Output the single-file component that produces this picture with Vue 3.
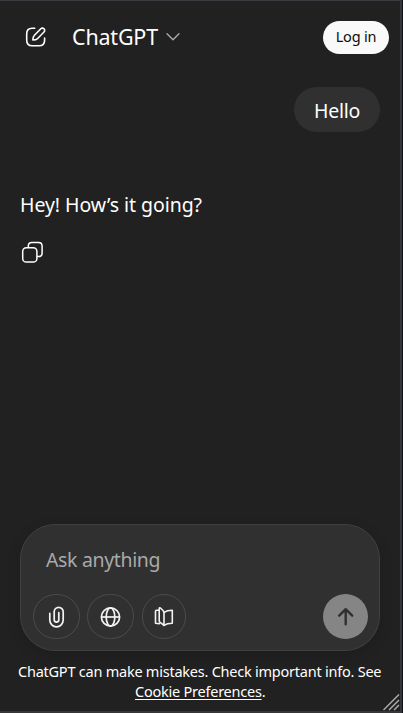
<script setup>
</script>

<template>
  <div class="window">
    <header class="topbar">
      <svg class="compose" viewBox="0 0 24 24" width="24" height="24" fill="none" stroke="currentColor" stroke-width="1.6" stroke-linecap="round" stroke-linejoin="round">
        <path d="M10.7 3.2H8.2C4.3 3.2 2.7 4.8 2.7 8.7v6.6c0 3.9 1.6 5.5 5.5 5.5h6.9c3.9 0 5.5-1.6 5.5-5.5V13" />
        <path d="M16.8 3.8a2.25 2.25 0 0 1 3.2 3.2l-6.6 6.7c-.8.8-2.4 1.3-4.5 1.3 0-2.1.4-3.7 1.3-4.5z" />
      </svg>
      <h1 class="title">ChatGPT</h1>
      <svg class="chevron" viewBox="0 0 16 10" width="16" height="10" fill="none" stroke="currentColor" stroke-width="1.4" stroke-linecap="round" stroke-linejoin="round">
        <path d="M2 1.8 8 7.8l6-6" />
      </svg>
      <button class="login"><span>Log in</span></button>
    </header>

    <main class="thread">
      <div class="bubble"><span>Hello</span></div>
      <p class="answer">Hey! How’s it going?</p>
      <svg class="copy" viewBox="0 0 24 24" width="24" height="24" fill="none" stroke="currentColor" stroke-width="1.5" stroke-linejoin="round">
        <rect x="2.7" y="7.8" width="14.2" height="14.2" rx="3.6" />
        <path d="M8.3 7.8V6.2c0-2.5 1.1-3.6 3.6-3.6h6.6c2.5 0 3.6 1.1 3.6 3.6V13c0 2.5-1.1 3.6-3.6 3.6h-1.6" />
      </svg>
    </main>

    <section class="composer">
      <div class="prompt">Ask anything</div>
      <div class="tools">
        <button class="tool">
          <svg viewBox="0 0 24 24" width="24" height="24" fill="none" stroke="currentColor" stroke-width="1.7" stroke-linecap="round">
            <path d="M4.8 8.3v6.8a6.7 6.7 0 0 0 13.4 0V6.8a4.5 4.5 0 0 0-9 0v8a2.3 2.3 0 0 0 4.6 0V7.7" />
          </svg>
        </button>
        <button class="tool">
          <svg viewBox="0 0 24 24" width="24" height="24" fill="none" stroke="currentColor" stroke-width="1.7">
            <circle cx="11.5" cy="12" r="9.1" />
            <ellipse cx="11.5" cy="12" rx="4.3" ry="9.1" />
            <path d="M2.4 12h18.2" />
          </svg>
        </button>
        <button class="tool study">
          <svg viewBox="0 0 24 24" width="24" height="24" fill="none" stroke="currentColor" stroke-width="1.6" stroke-linejoin="round" stroke-linecap="round">
            <path d="M12 7.4c2.3-1.7 5-2.2 8.3-2.2v13.1c-3.3 0-6 .4-8.3 2" />
            <path d="M7.2 5.2H4.5c-.7 0-1 .3-1 1v12.1c1.4 0 2.7.1 3.8.3" />
            <path d="M7.2 3.8v12c0 .7.3 1.2.9 1.6L12 20.3V7.5c0-.7-.2-1.2-.8-1.7L8.7 3.3C7.9 2.5 7.2 2.8 7.2 3.8z" />
          </svg>
        </button>
        <button class="send">
          <svg viewBox="0 0 24 24" width="24" height="24" fill="none" stroke="currentColor" stroke-width="2.4" stroke-linecap="round" stroke-linejoin="round">
            <path d="M11.7 19.3V4.2M5.2 10.7l6.5-6.5 6.5 6.5" />
          </svg>
        </button>
      </div>
    </section>

    <footer class="notice">
      <div class="line">ChatGPT can make mistakes. Check important info. See</div>
      <div class="line second"><a>Cookie Preferences</a>.</div>
    </footer>

    <svg class="grip" viewBox="0 0 17 17" width="17" height="17" fill="none" stroke="#aaa" stroke-width="1.5">
      <path d="M0.5 16 16 .5M6 16 16 6M11 16l5-5" />
    </svg>
  </div>
</template>

<style>
body {
  background: #101116;
}
</style>

<style scoped>
.window {
  position: relative;
  box-sizing: border-box;
  display: flex;
  flex-direction: column;
  width: 402px;
  height: 713px;
  padding-right: 1px;
  overflow: hidden;
  background: #212121;
  border-top: 1px solid #3a3a40;
  border-right: 2px solid #36363a;
  border-bottom: 2px solid #36363a;
  color: #fff;
  font-family: "Noto Sans", "Open Sans", sans-serif;
}
button {
  display: flex;
  align-items: center;
  justify-content: center;
  padding: 0;
  border: 0;
  font-family: inherit;
}
svg {
  display: block;
  flex: none;
}
.topbar {
  display: flex;
  flex: none;
  align-items: center;
  height: 72px;
  padding-left: 24px;
  padding-right: 10px;
}
.title {
  margin: 0 0 0 24px;
  width: 86px;
  font-size: 21.5px;
  line-height: 30px;
  font-weight: 400;
  letter-spacing: -0.2px;
  white-space: nowrap;
}
.chevron {
  margin-left: 7px;
  color: #aaa;
}
.login {
  width: 66px;
  height: 33px;
  margin-left: auto;
  border-radius: 17px;
  background: #f9f9f9;
  color: #0d0d0d;
  font-size: 14.5px;
  letter-spacing: -0.2px;
}
.login span {
  padding-bottom: 2px;
}
.thread {
  display: flex;
  flex: none;
  flex-direction: column;
  height: 451px;
  padding: 14px 19px 0 20px;
  box-sizing: border-box;
}
.bubble {
  display: flex;
  align-items: center;
  justify-content: center;
  align-self: flex-end;
  width: 86px;
  height: 45px;
  border-radius: 23px;
  background: #303030;
  font-size: 19.5px;
  letter-spacing: -0.3px;
}
.bubble span {
  padding-top: 2px;
}
.answer {
  margin: 58px 0 0;
  font-size: 19.5px;
  line-height: 30px;
  letter-spacing: -0.05px;
  white-space: nowrap;
}
.copy {
  margin-top: 20px;
}
.composer {
  box-sizing: border-box;
  flex: none;
  width: 360px;
  height: 127px;
  margin-left: 20px;
  padding: 20px 11px 0 12px;
  border: 1px solid #414141;
  border-radius: 35px;
  background: #303030;
  box-shadow: 0 4px 14px rgba(0, 0, 0, 0.14);
}
.prompt {
  padding-left: 13px;
  font-size: 19.5px;
  line-height: 30px;
  letter-spacing: -0.35px;
  color: #a9a9a9;
}
.tools {
  display: flex;
  margin-top: 19px;
}
.tool {
  box-sizing: border-box;
  width: 47px;
  height: 45px;
  margin-right: 7px;
  border: 1px solid #4b4b4b;
  border-radius: 24px;
  background: transparent;
  color: #f3f3f3;
}
.study {
  width: 44px;
  margin-left: 1px;
}
.send {
  width: 45px;
  height: 45px;
  margin-left: auto;
  border-radius: 50%;
  background: #858585;
  color: #303030;
}
.notice {
  padding-top: 10px;
  font-size: 14.5px;
  line-height: 20px;
  white-space: nowrap;
}
.line {
  padding-left: 18px;
  letter-spacing: -0.235px;
}
.second {
  padding-left: 135px;
}
.second a {
  text-decoration: underline;
  text-underline-offset: 2px;
  text-decoration-thickness: 1px;
}
.grip {
  position: absolute;
  right: 0;
  bottom: 0;
}
</style>
